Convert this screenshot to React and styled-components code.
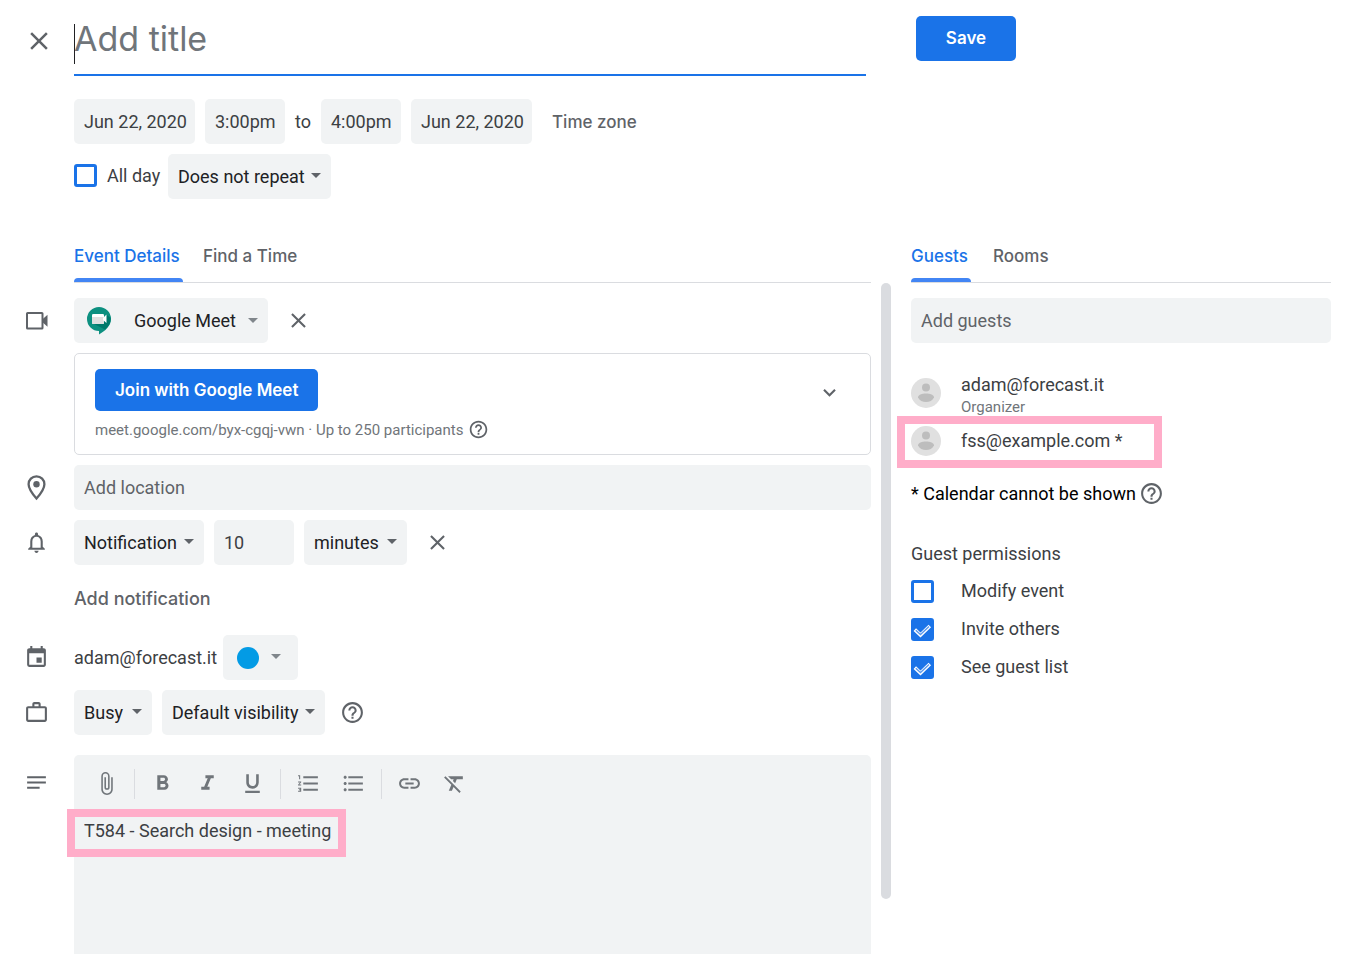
import React from 'react';
import styled, { createGlobalStyle } from 'styled-components';
import {
  MdAttachFile,
  MdClose,
  MdEvent,
  MdExpandMore,
  MdFormatBold,
  MdFormatClear,
  MdFormatItalic,
  MdFormatListBulleted,
  MdFormatListNumbered,
  MdFormatUnderlined,
  MdHelpOutline,
  MdInsertLink,
  MdNotes,
  MdNotificationsNone,
  MdWorkOutline,
} from 'react-icons/md';

const GlobalStyle = createGlobalStyle`
  *, *::before, *::after {
    box-sizing: border-box;
  }
  body {
    margin: 0;
    background: #fff;
    color: #3c4043;
    font-family: Roboto, 'Liberation Sans', sans-serif;
    font-size: 18px;
    line-height: 24px;
  }
  button, input, select, textarea {
    margin: 0;
    font: inherit;
    color: inherit;
  }
  svg {
    display: block;
    flex: none;
  }
`;

const display = "Inter, 'Liberation Sans', sans-serif";

const Page = styled.div`
  min-height: 100vh;
  display: flex;
  flex-direction: column;
`;

const Header = styled.header`
  display: grid;
  grid-template-columns: 74px minmax(0, 1fr) 431px;
`;

const IconButton = styled.button`
  display: flex;
  align-items: center;
  justify-content: center;
  width: ${({ $size }) => $size || 40}px;
  height: ${({ $size }) => $size || 40}px;
  padding: 0;
  border: 0;
  background: none;
  color: #5f6368;
  cursor: pointer;
`;

const CloseCell = styled.div`
  padding: 21px 0 0 19px;
`;

const TitleField = styled.div`
  position: relative;
  height: 76px;
  margin-right: 50px;
  border-bottom: 2px solid #1a73e8;

  &::before {
    content: '';
    position: absolute;
    top: 24px;
    left: 0;
    width: 1px;
    height: 40px;
    background: #202124;
  }
`;

const TitleInput = styled.input`
  display: block;
  width: 100%;
  height: 74px;
  padding: 2px 0 0;
  border: 0;
  outline: 0;
  background: none;
  font-family: ${display};
  font-size: 34px;

  &::placeholder {
    color: #70757a;
    opacity: 1;
  }
`;

const PrimaryButton = styled.button`
  height: 42px;
  min-width: 100px;
  padding: 0 20px;
  border: 0;
  border-radius: 5px;
  background: #1a73e8;
  color: #fff;
  font-family: ${display};
  font-size: 17px;
  font-weight: 600;
  cursor: pointer;
`;

const SaveButton = styled(PrimaryButton)`
  height: 45px;
  padding-bottom: 1px;
`;

const SaveCell = styled.div`
  padding-top: 16px;
`;

const Schedule = styled.div`
  display: flex;
  flex-direction: column;
  gap: 10px;
  padding: 23px 0 0 74px;
`;

const Line = styled.div`
  display: flex;
  align-items: center;
  gap: 10px;
`;

const Field = styled.input`
  width: ${({ $width }) => ($width ? `${$width}px` : '100%')};
  height: 45px;
  padding: 0 5px 1px 10px;
  border: 0;
  border-radius: 5px;
  outline: 0;
  background: #f1f3f4;

  &::placeholder {
    color: #5f6368;
    opacity: 1;
  }
`;

const GuestField = styled(Field)`
  padding-bottom: 0;
`;

const To = styled.span`
  min-width: 16px;
`;

const TextButton = styled.button`
  padding: 0;
  border: 0;
  background: none;
  color: #5f6368;
  font-family: ${display};
  font-size: 17px;
  font-weight: 500;
  cursor: pointer;
`;

const ZoneButton = styled(TextButton)`
  padding: 0 10px;
`;

const AddButton = styled(TextButton)`
  font-size: 18px;
`;

const CheckLabel = styled.label`
  display: flex;
  align-items: center;
  gap: ${({ $gap }) => $gap}px;
  white-space: nowrap;
`;

const CheckInput = styled.input`
  appearance: none;
  grid-area: 1 / 1;
  width: 23px;
  height: 23px;
  border: 3px solid #1a73e8;
  border-radius: 3px;
  background: #fff;

  &:checked {
    background: #1a73e8;
  }
`;

const CheckBox = styled.span`
  display: grid;
  place-items: center;

  svg {
    grid-area: 1 / 1;
    z-index: 1;
    pointer-events: none;
  }
`;

const AllDay = styled.div`
  width: 84px;
  padding-bottom: 2px;
`;

const SelectBox = styled.span`
  position: relative;
  width: ${({ $width }) => $width}px;
  height: 45px;
  border-radius: 5px;
  background: #f1f3f4;

  &::after {
    content: '';
    position: absolute;
    top: ${({ $logo }) => ($logo ? 20 : 19)}px;
    right: 10px;
    border: 5px solid transparent;
    border-top-color: ${({ $logo }) => ($logo ? '#80868b' : '#5f6368')};
    border-bottom: 0;
    pointer-events: none;
  }
`;

const Select = styled.select`
  appearance: none;
  width: 100%;
  height: 45px;
  padding: 0 20px 0 ${({ $indent }) => $indent}px;
  border: 0;
  outline: 0;
  background: none;
  color: #202124;
`;

const SelectLogo = styled.span`
  position: absolute;
  top: 8px;
  left: 12px;
  pointer-events: none;
`;

const Owner = styled.span`
  width: 139px;
  white-space: nowrap;
`;

const ColorButton = styled.button`
  display: flex;
  align-items: center;
  gap: 12px;
  height: 45px;
  padding: 0 17px 0 14px;
  border: 0;
  border-radius: 5px;
  background: #f1f3f4;

  &::before {
    content: '';
    width: 22px;
    height: 22px;
    border-radius: 50%;
    background: #039be5;
  }
  &::after {
    content: '';
    margin-bottom: 3px;
    border: 5px solid transparent;
    border-top-color: #80868b;
    border-bottom: 0;
  }
`;

const Main = styled.main`
  flex: 1;
  display: grid;
  grid-template-columns: minmax(0, 1fr) 10px 440px;
  padding: 30px 16px 0 0;
`;

const Details = styled.section`
  display: flex;
  flex-direction: column;
  margin-right: 10px;
`;

const ScrollThumb = styled.div`
  margin: 54px 0 55px;
  border-radius: 5px;
  background: #dadce0;
`;

const Guests = styled.aside`
  padding-left: 20px;
`;

const Tabs = styled.nav`
  display: flex;
  gap: ${({ $gap }) => $gap}px;
  height: 54px;
  margin-left: ${({ $indent }) => $indent || 0}px;
  border-bottom: 1px solid #dadce0;
`;

const Tab = styled(TextButton)`
  position: relative;
  min-width: ${({ $width }) => $width || 0}px;
  color: ${({ $active }) => ($active ? '#1a73e8' : '#5f6368')};
  text-align: left;

  &::after {
    content: '';
    position: absolute;
    right: 0;
    bottom: 0;
    left: 0;
    height: 4px;
    border-radius: 4px 4px 0 0;
    background: ${({ $active }) => ($active ? '#4285f4' : 'transparent')};
  }
`;

const Rows = styled.div`
  flex: 1;
  display: flex;
  flex-direction: column;
  gap: 10px;
  padding-top: 15px;
`;

const Row = styled.div`
  display: grid;
  grid-template-columns: 74px minmax(0, 1fr);
  align-items: center;
`;

const NotesRow = styled(Row)`
  flex: 1;
  align-items: stretch;
  padding-top: 10px;
`;

const RowIcon = styled.span`
  display: flex;
  justify-content: center;
  padding-right: 1px;
  color: #5f6368;
`;

const NotesIcon = styled(RowIcon)`
  padding-top: 15px;
`;

const MeetCard = styled.div`
  display: flex;
  align-items: center;
  justify-content: space-between;
  height: 102px;
  margin-left: 74px;
  padding: 2px 21px 0 20px;
  border: 1px solid #dadce0;
  border-radius: 5px;
`;

const ExpandButton = styled(IconButton)`
  margin-bottom: 26px;
`;

const MeetInfo = styled.div`
  display: flex;
  align-items: center;
  gap: 5px;
  padding-top: 7px;
  color: #70757a;
  font-size: 15px;
`;

const AddRow = styled.div`
  display: flex;
  align-items: center;
  height: 50px;
  padding-bottom: 2px;
  margin-left: 74px;
`;

const Editor = styled.div`
  display: flex;
  flex-direction: column;
  padding: 6px 10px 0;
  border-radius: 5px 5px 0 0;
  background: #f1f3f4;
`;

const Toolbar = styled.div`
  display: flex;
  align-items: center;
  height: 45px;
`;

const Divider = styled.span`
  width: 1px;
  height: 30px;
  margin: 0 5px;
  background: #dadce0;
`;

const ToolButton = styled(IconButton)`
  color: #70757a;
`;

// Pink frame laid over a line that deserves attention
const Callout = styled.div`
  position: relative;
  width: ${({ $width }) => $width}px;

  &::after {
    content: '';
    position: absolute;
    inset: ${({ $inset }) => $inset};
    border: 8px solid #ffadc9;
    pointer-events: none;
  }
`;

const NoteCallout = styled(Callout)`
  margin-top: 13px;
`;

const NoteInput = styled.textarea`
  display: block;
  width: 100%;
  height: 24px;
  padding: 0;
  border: 0;
  outline: 0;
  resize: none;
  overflow: hidden;
  background: none;
`;

const GuestForm = styled.div`
  padding-top: 15px;
`;

const GuestList = styled.ul`
  display: flex;
  flex-direction: column;
  gap: 13px;
  margin: 0;
  padding: 30px 0 0;
  list-style: none;
`;

const Guest = styled.li`
  display: grid;
  grid-template-columns: 30px minmax(0, 1fr);
  gap: 20px;
  align-items: center;
  min-height: 30px;
`;

const Role = styled.div`
  margin-bottom: -4px;
  color: #70757a;
  font-size: 15px;
  line-height: 20px;
`;

const CalendarNote = styled.p`
  display: flex;
  align-items: center;
  gap: 3px;
  margin: 0;
  padding-top: 25px;
  color: #000;
`;

const Permissions = styled.fieldset`
  display: flex;
  flex-direction: column;
  gap: 14px;
  margin: 0;
  padding: 0;
  border: 0;
`;

const Legend = styled.legend`
  padding: 36px 0 13px;
`;

const CheckMark = () => (
  <svg width="23" height="23" viewBox="0 0 23 23" fill="none" aria-hidden="true">
    <path d="M3.8 11.6 L9.5 17 L18.8 8" stroke="#fff" strokeWidth="3.6" />
    <path d="M4.8 12.2 L9.5 16.6 L18 8.6" stroke="#5a99ee" strokeWidth="1.4" />
  </svg>
);

const Checkbox = ({ label, gap, checked }) => (
  <CheckLabel $gap={gap}>
    <CheckBox>
      <CheckInput type="checkbox" defaultChecked={checked} />
      {checked && <CheckMark />}
    </CheckBox>
    {label}
  </CheckLabel>
);

const Dropdown = ({ label, value, width, logo }) => (
  <SelectBox $width={width} $logo={Boolean(logo)}>
    {logo && <SelectLogo>{logo}</SelectLogo>}
    <Select aria-label={label} $indent={logo ? 60 : 10}>
      <option>{value}</option>
    </Select>
  </SelectBox>
);

const Camera = () => (
  <svg width="22" height="18" viewBox="0 0 22 18" aria-hidden="true">
    <rect x="1" y="1" width="15.5" height="15.5" rx="0.6" fill="none" stroke="currentColor" strokeWidth="2" />
    <path d="M16.5 7.2 L21.5 2.8 V14.7 L16.5 10.3 Z" fill="currentColor" />
  </svg>
);

const Pin = () => (
  <svg width="19" height="26" viewBox="0 0 19 26" aria-hidden="true">
    <path
      d="M9.5 1.3 C5 1.3 1.6 4.8 1.6 9.2 C1.6 14.5 9.5 23.5 9.5 23.5 S17.4 14.5 17.4 9.2 C17.4 4.8 14 1.3 9.5 1.3 Z"
      fill="none"
      stroke="currentColor"
      strokeWidth="2.3"
    />
    <circle cx="9.5" cy="9.3" r="3.2" fill="currentColor" />
  </svg>
);

const MeetLogo = () => (
  <svg width="26" height="30" viewBox="0 0 26 30" aria-hidden="true">
    <path d="M13 1 A12 12 0 0 1 25 13 C25 20 19 25 13 28.5 V25 A12 12 0 0 1 13 1 Z" fill="#0d9080" />
    <path d="M20.5 8.5 L24.6 12 C25 17 22.5 20.5 19 23.5 L8 18 L17 17 Z" fill="#00796b" />
    <rect x="6" y="8" width="12" height="10" rx="1.3" fill="#fff" />
    <path d="M6 11 H18 V16.7 A1.3 1.3 0 0 1 16.7 18 H7.3 A1.3 1.3 0 0 1 6 16.7 Z" fill="#e0e0e0" />
    <path d="M17 12 L20.5 8.5 V17 L17 14 Z" fill="#fff" />
  </svg>
);

const Avatar = () => (
  <svg width="30" height="30" viewBox="0 0 30 30" aria-hidden="true">
    <circle cx="15" cy="15" r="15" fill="#e0e0e0" />
    <circle cx="15" cy="9.6" r="4" fill="#bdbdbd" />
    <path d="M7 19.5 C7 16.8 11 15.6 15 15.6 S23 16.8 23 19.5 C21.5 22.5 18.5 24 15 24 S8.5 22.5 7 19.5 Z" fill="#bdbdbd" />
  </svg>
);

const tools = [
  [['Attach file', MdAttachFile]],
  [['Bold', MdFormatBold], ['Italic', MdFormatItalic], ['Underline', MdFormatUnderlined]],
  [['Numbered list', MdFormatListNumbered], ['Bulleted list', MdFormatListBulleted]],
  [['Insert link', MdInsertLink], ['Remove formatting', MdFormatClear]],
];

export default function App() {
  return (
    <Page>
      <GlobalStyle />
      <Header>
        <CloseCell>
          <IconButton aria-label="Close"><MdClose size={30} /></IconButton>
        </CloseCell>
        <TitleField>
          <TitleInput aria-label="Title" placeholder="Add title" />
        </TitleField>
        <SaveCell>
          <SaveButton>Save</SaveButton>
        </SaveCell>
      </Header>

      <Schedule>
        <Line>
          <Field $width={121} aria-label="Start date" defaultValue="Jun 22, 2020" />
          <Field $width={80} aria-label="Start time" defaultValue="3:00pm" />
          <To>to</To>
          <Field $width={80} aria-label="End time" defaultValue="4:00pm" />
          <Field $width={121} aria-label="End date" defaultValue="Jun 22, 2020" />
          <ZoneButton>Time zone</ZoneButton>
        </Line>
        <Line>
          <AllDay><Checkbox label="All day" gap={10} /></AllDay>
          <Dropdown label="Repeat" value="Does not repeat" width={163} />
        </Line>
      </Schedule>

      <Main>
        <Details>
          <Tabs $indent={74} $gap={20}>
            <Tab $active $width={109}>Event Details</Tab>
            <Tab>Find a Time</Tab>
          </Tabs>
          <Rows>
            <Row>
              <RowIcon><Camera /></RowIcon>
              <Line>
                <Dropdown label="Conferencing" value="Google Meet" width={194} logo={<MeetLogo />} />
                <IconButton aria-label="Remove conferencing"><MdClose size={25} /></IconButton>
              </Line>
            </Row>
            <MeetCard>
              <div>
                <PrimaryButton>Join with Google Meet</PrimaryButton>
                <MeetInfo>
                  meet.google.com/byx-cgqj-vwn · Up to 250 participants
                  <MdHelpOutline size={21} color="#5f6368" />
                </MeetInfo>
              </div>
              <ExpandButton aria-label="Show joining info"><MdExpandMore size={25} /></ExpandButton>
            </MeetCard>
            <Row>
              <RowIcon><Pin /></RowIcon>
              <Field aria-label="Location" placeholder="Add location" />
            </Row>
            <Row>
              <RowIcon><MdNotificationsNone size={25} /></RowIcon>
              <Line>
                <Dropdown label="Notification type" value="Notification" width={130} />
                <Field $width={80} aria-label="Amount" defaultValue="10" />
                <Dropdown label="Unit" value="minutes" width={103} />
                <IconButton aria-label="Remove notification"><MdClose size={25} /></IconButton>
              </Line>
            </Row>
            <AddRow><AddButton>Add notification</AddButton></AddRow>
            <Row>
              <RowIcon><MdEvent size={25} /></RowIcon>
              <Line>
                <Owner>adam@forecast.it</Owner>
                <ColorButton aria-label="Event color" />
              </Line>
            </Row>
            <Row>
              <RowIcon><MdWorkOutline size={25} /></RowIcon>
              <Line>
                <Dropdown label="Availability" value="Busy" width={78} />
                <Dropdown label="Visibility" value="Default visibility" width={163} />
                <IconButton $size={35} aria-label="Visibility help"><MdHelpOutline size={25} /></IconButton>
              </Line>
            </Row>
            <NotesRow>
              <NotesIcon><MdNotes size={25} /></NotesIcon>
              <Editor>
                <Toolbar>
                  {tools.map((group, i) => (
                    <React.Fragment key={i}>
                      {i > 0 && <Divider />}
                      {group.map(([name, Icon]) => (
                        <ToolButton key={name} $size={45} aria-label={name}><Icon size={25} /></ToolButton>
                      ))}
                    </React.Fragment>
                  ))}
                </Toolbar>
                <NoteCallout $width={254} $inset="-10px -8px -14px -17px">
                  <NoteInput aria-label="Description" rows={1} defaultValue="T584 - Search design - meeting" />
                </NoteCallout>
              </Editor>
            </NotesRow>
          </Rows>
        </Details>
        <ScrollThumb />
        <Guests>
          <Tabs $gap={22}>
            <Tab $active $width={60}>Guests</Tab>
            <Tab>Rooms</Tab>
          </Tabs>
          <GuestForm>
            <GuestField aria-label="Add guests" placeholder="Add guests" />
            <GuestList>
              <Guest>
                <Avatar />
                <div>
                  adam@forecast.it
                  <Role>Organizer</Role>
                </div>
              </Guest>
              <Callout as="li" $width={237} $inset="-10px -14px -12px -14px">
                <Guest as="div">
                  <Avatar />
                  <span>fss@example.com *</span>
                </Guest>
              </Callout>
            </GuestList>
            <CalendarNote>
              * Calendar cannot be shown
              <MdHelpOutline size={25} color="#5f6368" />
            </CalendarNote>
            <Permissions>
              <Legend>Guest permissions</Legend>
              <Checkbox label="Modify event" gap={27} />
              <Checkbox label="Invite others" gap={27} checked />
              <Checkbox label="See guest list" gap={27} checked />
            </Permissions>
          </GuestForm>
        </Guests>
      </Main>
    </Page>
  );
}
